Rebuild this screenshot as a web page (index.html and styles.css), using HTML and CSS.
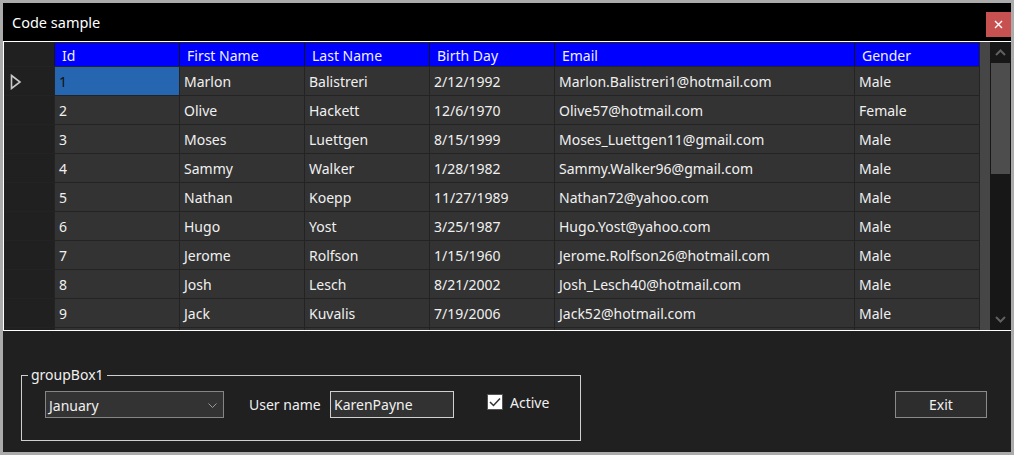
FILE: index.html
```html
<!DOCTYPE html>
<html>
<head>
<meta charset="utf-8">
<link rel="stylesheet" href="styles.css">
</head>
<body>
<div class="window">
  <div class="titlebar">
    <span class="title">Code sample</span>
    <div class="close"><svg width="9" height="9" viewBox="0 0 9 9"><path d="M1 1L8 8M8 1L1 8" stroke="#fff" stroke-width="1.4"/></svg></div>
  </div>
  <div class="grid">
    <div class="table">
      <div class="hc rh"></div><div class="hc">Id</div><div class="hc">First Name</div><div class="hc">Last Name</div><div class="hc">Birth Day</div><div class="hc">Email</div><div class="hc">Gender</div>

      <div class="rh cur"><svg width="12" height="16" viewBox="0 0 12 16"><path d="M1.5 1.5L10 8L1.5 14.5Z" fill="none" stroke="#c8c8c8" stroke-width="1.6"/></svg></div><div class="c sel">1</div><div class="c">Marlon</div><div class="c">Balistreri</div><div class="c">2/12/1992</div><div class="c">Marlon.Balistreri1@hotmail.com</div><div class="c">Male</div>
      <div class="rh"></div><div class="c">2</div><div class="c">Olive</div><div class="c">Hackett</div><div class="c">12/6/1970</div><div class="c">Olive57@hotmail.com</div><div class="c">Female</div>
      <div class="rh"></div><div class="c">3</div><div class="c">Moses</div><div class="c">Luettgen</div><div class="c">8/15/1999</div><div class="c">Moses_Luettgen11@gmail.com</div><div class="c">Male</div>
      <div class="rh"></div><div class="c">4</div><div class="c">Sammy</div><div class="c">Walker</div><div class="c">1/28/1982</div><div class="c">Sammy.Walker96@gmail.com</div><div class="c">Male</div>
      <div class="rh"></div><div class="c">5</div><div class="c">Nathan</div><div class="c">Koepp</div><div class="c">11/27/1989</div><div class="c">Nathan72@yahoo.com</div><div class="c">Male</div>
      <div class="rh"></div><div class="c">6</div><div class="c">Hugo</div><div class="c">Yost</div><div class="c">3/25/1987</div><div class="c">Hugo.Yost@yahoo.com</div><div class="c">Male</div>
      <div class="rh"></div><div class="c">7</div><div class="c">Jerome</div><div class="c">Rolfson</div><div class="c">1/15/1960</div><div class="c">Jerome.Rolfson26@hotmail.com</div><div class="c">Male</div>
      <div class="rh"></div><div class="c">8</div><div class="c">Josh</div><div class="c">Lesch</div><div class="c">8/21/2002</div><div class="c">Josh_Lesch40@hotmail.com</div><div class="c">Male</div>
      <div class="rh"></div><div class="c">9</div><div class="c">Jack</div><div class="c">Kuvalis</div><div class="c">7/19/2006</div><div class="c">Jack52@hotmail.com</div><div class="c">Male</div>
      <div class="rh"></div><div class="c"></div><div class="c"></div><div class="c"></div><div class="c"></div><div class="c"></div><div class="c"></div>
    </div>
    <div class="filler"></div>
    <div class="scrollbar">
      <div class="sb-btn"><svg width="11" height="7" viewBox="0 0 11 7"><path d="M1 6L5.5 1.5L10 6" fill="none" stroke="#606060" stroke-width="2"/></svg></div>
      <div class="sb-track"><div class="sb-thumb"></div></div>
      <div class="sb-btn"><svg width="11" height="7" viewBox="0 0 11 7"><path d="M1 1L5.5 5.5L10 1" fill="none" stroke="#606060" stroke-width="2"/></svg></div>
    </div>
  </div>
  <div class="panel">
    <fieldset class="group">
      <legend>groupBox1</legend>
      <div class="group-body">
        <div class="combo"><span>January</span><svg width="9" height="5" viewBox="0 0 9 5"><path d="M0.5 0.5L4.5 4.5L8.5 0.5" fill="none" stroke="#9a9a9a" stroke-width="1"/></svg></div>
        <span class="lbl">User name</span>
        <div class="textbox">KarenPayne</div>
        <div class="check"><span class="box"><svg width="12" height="10" viewBox="0 0 12 10"><path d="M1 5L4.5 8.5L11 1.5" fill="none" stroke="#333" stroke-width="1.5"/></svg></span><span>Active</span></div>
      </div>
    </fieldset>
    <div class="exit">Exit</div>
  </div>
</div>
</body>
</html>
```
FILE: styles.css
```css
* { box-sizing: border-box; }
html, body { margin: 0; padding: 0; background: #202020; }
body { font-family: "Noto Sans", "Open Sans", sans-serif; font-size: 14px; color: #f0f0f0; }

.window {
  width: 1014px;
  height: 455px;
  border: 3px solid #ababab;
  background: #202020;
  display: flex;
  flex-direction: column;
}

.titlebar {
  height: 38px;
  flex: none;
  background: #000;
  display: flex;
  align-items: center;
  padding-left: 9px;
}
.title { flex: 1; color: #fff; font-size: 14.5px; margin-top: -1px; }
.close {
  align-self: flex-start;
  margin-top: 9px;
  width: 25px;
  height: 25px;
  background: #c75050;
  display: flex;
  align-items: center;
  justify-content: center;
}

.grid {
  height: 290px;
  flex: none;
  border-top: 1px solid #ffffff;
  border-bottom: 1px solid #ffffff;
  border-left: 1px solid #ffffff;
  display: flex;
}
.table {
  width: 976px;
  height: 288px;
  overflow: hidden;
  display: grid;
  grid-template-columns: 49px 124px 124px 124px 124px 299px 124px;
  grid-template-rows: 23px;
  grid-auto-rows: 28px;
  gap: 1px;
  padding: 1px 1px 0 1px;
  background: #232323;
  align-content: start;
}
.hc {
  background: #0000ff;
  color: #eeeeff;
  padding: 2px 0 0 7px;
  display: flex;
  align-items: center;
  white-space: nowrap;
  box-shadow: -1px 0 0 #151515;
}
.hc.rh { box-shadow: none; }
.c {
  background: #333333;
  padding: 1px 0 0 4px;
  display: flex;
  align-items: center;
  white-space: nowrap;
}
.c.sel { background: #2665b0; color: #111; }
.rh { background: #202020; }
.rh.cur { display: flex; align-items: center; padding-left: 5px; padding-top: 1px; }

.filler { width: 10px; background: #464646; }
.scrollbar {
  width: 21px;
  background: #171717;
  display: flex;
  flex-direction: column;
}
.sb-btn {
  height: 21px;
  flex: none;
  display: flex;
  align-items: center;
  justify-content: center;
}
.sb-track { flex: 1; padding: 0 1px; }
.sb-thumb { height: 111px; background: #4d4d4d; }

.panel {
  flex: 1;
  display: flex;
  align-items: flex-start;
  padding-left: 18px;
  padding-right: 24px;
}
.group {
  margin: 34px 0 0 0;
  padding: 0;
  width: 560px;
  height: 76px;
  border: 1px solid #cfcfcf;
  min-width: 0;
}
.group legend {
  margin-left: 6px;
  padding: 0 3px;
  line-height: 20px;
  color: #f0f0f0;
}
.group-body {
  display: flex;
  align-items: flex-start;
  padding: 6px 0 0 23px;
}
.combo {
  width: 179px;
  height: 27px;
  border: 1px solid #858585;
  background: #333333;
  display: flex;
  align-items: center;
  justify-content: space-between;
  padding: 1px 6px 0 3px;
}
.lbl {
  width: 81px;
  margin-left: 25px;
  height: 27px;
  line-height: 28px;
}
.textbox {
  width: 124px;
  height: 27px;
  border: 1px solid #d0d0d0;
  background: #323232;
  padding-left: 3px;
  line-height: 26px;
}
.check {
  margin-left: 33px;
  margin-top: 3px;
  display: flex;
  align-items: center;
  gap: 7px;
  height: 16px;
}
.box {
  width: 16px;
  height: 16px;
  background: #fff;
  border: 1px solid #555;
  display: flex;
  align-items: center;
  justify-content: center;
}
.exit {
  margin-left: auto;
  margin-top: 60px;
  width: 92px;
  height: 27px;
  border: 1px solid #8a8a8a;
  background: #2d2d2d;
  display: flex;
  align-items: center;
  justify-content: center;
}
```
